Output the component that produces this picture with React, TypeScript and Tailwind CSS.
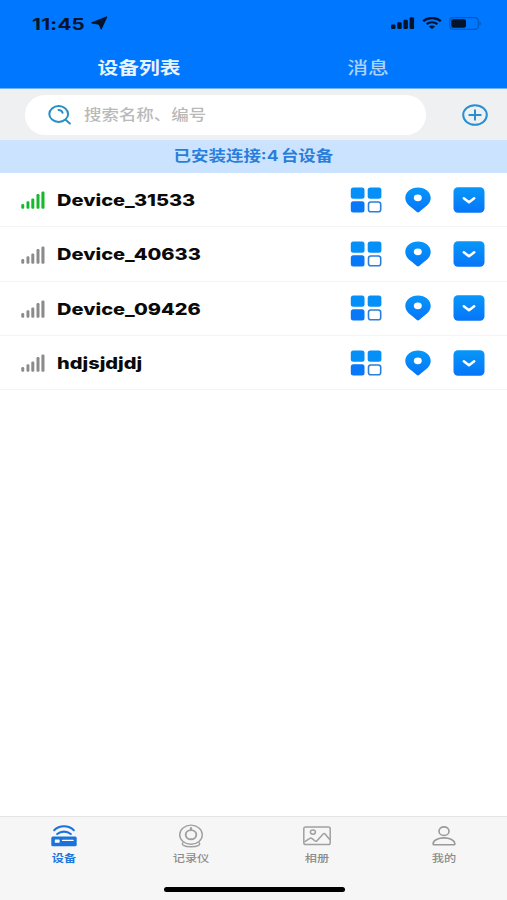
import React from 'react';
import { clsx } from 'clsx';

interface Device {
  name: string;
  online: boolean;
}

interface TabItemProps {
  icon: React.ElementType;
  label: string;
  isActive?: boolean;
}

const devices: Device[] = [
  { name: 'Device_31533', online: true },
  { name: 'Device_40633', online: false },
  { name: 'Device_09426', online: false },
  { name: 'hdjsjdjdj', online: false },
];

const StatusBar: React.FC = () => (
  <div className="flex h-[46px] items-center justify-between pr-[25px] pl-[32px]">
    <div className="flex items-center">
      <span className="w-[59px] origin-left scale-x-[1.25] pt-[2px] text-[16.5px] leading-none font-bold tracking-[0.2px] text-[#03142b]">
        11:45
      </span>
      <svg width="17" height="14" viewBox="0 0 17 14" fill="#03142b" stroke="#03142b" strokeWidth="1.3" strokeLinejoin="round">
        <path d="M15.600 1 10.200 12.800 8.300 8.200 1 6.900z" />
      </svg>
    </div>
    <div className="flex items-center gap-[7px]">
      <svg width="24" height="12" viewBox="0 0 24 12" fill="#03142b">
        <rect x="0" y="7.500" width="4.500" height="4.500" rx="1.200" />
        <rect x="6.200" y="5.300" width="4.500" height="6.700" rx="1.200" />
        <rect x="12.400" y="2.800" width="4.500" height="9.200" rx="1.200" />
        <rect x="18.600" y="0.200" width="4.500" height="11.800" rx="1.200" />
      </svg>
      <svg width="20" height="12" viewBox="0 0 20 12" fill="none" stroke="#03142b">
        <path d="M1.200 4.200c5-4.200 12.600-4.200 17.600 0" strokeWidth="2.400" />
        <path d="M4.500 7.200c3.200-2.500 7.800-2.500 11 0" strokeWidth="2.300" />
        <path d="M10 12 6.900 9.500c1.800-1.400 4.400-1.400 6.200 0z" fill="#03142b" stroke="none" />
      </svg>
      <svg width="33" height="13" viewBox="0 0 33 13">
        <rect x="0.700" y="0.700" width="28.600" height="11.600" rx="3.500" fill="none" stroke="#0259bd" strokeWidth="1.200" />
        <rect x="2.300" y="2.300" width="14.700" height="8.400" rx="2" fill="#03142b" />
        <path d="M30.500 4.300c1.900.8 1.900 3.600 0 4.400z" fill="#0259bd" />
      </svg>
    </div>
  </div>
);

const SignalIcon: React.FC<{ online: boolean }> = ({ online }) => (
  <svg width="24" height="18" viewBox="0 0 24 18" fill={online ? '#14b92c' : '#8b8b8b'} className="mt-px">
    <rect x="0.300" y="13" width="2.900" height="4.700" rx="1.200" />
    <rect x="5.500" y="10.200" width="2.900" height="7.500" rx="1.200" />
    <rect x="10.300" y="7.500" width="3" height="10.200" rx="1.200" />
    <rect x="15.500" y="3" width="3" height="14.700" rx="1.200" />
    <rect x="20.400" y="0.500" width="3.100" height="17.200" rx="1.200" />
  </svg>
);

const GridIcon: React.FC = () => (
  <svg width="32" height="26" viewBox="0 0 32 26">
    <rect x="0.800" y="0.500" width="13.700" height="11.300" rx="2.500" fill="#058ff8" />
    <rect x="17.700" y="0.500" width="13.700" height="11.300" rx="2.500" fill="#058ff8" />
    <rect x="0.800" y="14.200" width="13.700" height="11.300" rx="2.500" fill="#0678f8" />
    <rect x="18.500" y="15" width="12.200" height="9.800" rx="2.300" fill="#fff" stroke="#2c7fd9" strokeWidth="1.600" />
  </svg>
);

const PinIcon: React.FC = () => (
  <svg width="26" height="26" viewBox="0 0 26 26">
    <path
      d="M13 .5C5.900.5.300 5 .300 10.800c0 4.300 2.700 7.200 6.200 9.700l5.400 4.600c.7.600 1.500.6 2.200 0l5.400-4.600c3.500-2.500 6.200-5.400 6.200-9.700C25.700 5 20.100.5 13 .5z"
      fill="url(#blueFade)"
    />
    <ellipse cx="12.800" cy="10.800" rx="4" ry="3.400" fill="#fff" />
  </svg>
);

const ExpandIcon: React.FC = () => (
  <svg width="32" height="26" viewBox="0 0 32 26">
    <rect x="0.500" y="0.300" width="31" height="25.400" rx="4.500" fill="url(#blueFade)" />
    <path d="m10.800 11.300 5.200 3.900 5.200-3.900" fill="none" stroke="#fff" strokeWidth="2.600" strokeLinecap="round" strokeLinejoin="round" />
  </svg>
);

const DeviceRow: React.FC<{ device: Device }> = ({ device }) => (
  <li className="flex h-[54.350px] items-center border-b border-[#f3f4f5] pr-[22px] pl-[21px]">
    <SignalIcon online={device.online} />
    <span className="ml-[11.500px] origin-left scale-x-[1.23] pt-px text-[16.300px] leading-none font-extrabold text-[#0a0a0a]">
      {device.name}
    </span>
    <div className="ml-auto flex items-center">
      <GridIcon />
      <div className="mr-[22px] ml-[23px]">
        <PinIcon />
      </div>
      <ExpandIcon />
    </div>
  </li>
);

const RouterIcon: React.FC = () => (
  <svg width="26" height="22" viewBox="0 0 26 22" fill="none">
    <path d="M3.200 5.200C8.500 0 17.500 0 22.800 5.200M6.200 9c3.900-3.200 9.700-3.200 13.600 0" stroke="#1b72dc" strokeWidth="2.100" strokeLinecap="round" />
    <rect x="0.300" y="11.400" width="25.400" height="9.900" rx="1.500" fill="#1b72dc" />
    <rect x="3.800" y="14.400" width="4.800" height="3.400" rx="0.600" fill="#fff" />
    <path d="M11.500 15.400h10.600" stroke="#fff" strokeWidth="1.300" strokeLinecap="round" />
  </svg>
);

const RecorderIcon: React.FC = () => (
  <svg width="26" height="24" viewBox="0 0 26 24" fill="none" stroke="#a0a0a0" strokeWidth="1.400">
    <ellipse cx="13" cy="10.700" rx="11.300" ry="9.600" />
    <ellipse cx="13" cy="10.700" rx="5.300" ry="4.600" strokeWidth="1.900" />
    <path d="M13 4.200v1.600" strokeWidth="2.200" strokeLinecap="round" />
    <path d="M5.400 18.400c-3 2 .5 4.300 7.600 4.300s10.600-2.300 7.600-4.300" />
  </svg>
);

const AlbumIcon: React.FC = () => (
  <svg width="28" height="20" viewBox="0 0 28 20" fill="none" stroke="#a0a0a0" strokeWidth="1.500" strokeLinejoin="round">
    <rect x="0.800" y="0.900" width="26.400" height="17.700" rx="1.800" />
    <ellipse cx="9.900" cy="6.100" rx="2.500" ry="2.100" />
    <path d="m1.500 15.800 5.300-3.500q1-.7 2 .1l3.300 2.600q.9.700 1.700-.1l6.600-7.100q.8-.8 1.500 0l5 6" />
  </svg>
);

const ProfileIcon: React.FC = () => (
  <svg width="24" height="20" viewBox="0 0 24 20" fill="none" stroke="#999" strokeWidth="1.600">
    <ellipse cx="12" cy="5.200" rx="5" ry="4.300" />
    <path d="M2.200 18.800c-.8 0-1.200-.5-1.100-1.200.4-3.400 5.100-5.700 10.900-5.700s10.500 2.300 10.900 5.700c.1.700-.3 1.200-1.100 1.200z" />
  </svg>
);

const TabItem: React.FC<TabItemProps> = ({ icon: Icon, label, isActive }) => (
  <button className="flex flex-1 flex-col items-center pt-[7px]">
    <span className="flex h-6 items-center">
      <Icon />
    </span>
    <span
      className={clsx(
        'mt-[3px] scale-x-[1.220] text-[10px] leading-[14px]',
        isActive ? 'font-bold text-[#2176dc]' : 'font-medium text-[#8c8c8c]'
      )}
    >
      {label}
    </span>
  </button>
);

export default function App() {
  return (
    <div className="flex h-[900px] w-[507px] flex-col overflow-hidden bg-white font-[Inter,'Noto_Sans_CJK_SC',sans-serif]">
      {/* Shared gradient for the row action icons */}
      <svg width="0" height="0" className="absolute">
        <defs>
          <linearGradient id="blueFade" x1="0" y1="0" x2="0" y2="1">
            <stop offset="0" stopColor="#0797f9" />
            <stop offset="1" stopColor="#0675f8" />
          </linearGradient>
        </defs>
      </svg>

      <header className="h-[89px] shrink-0 border-b border-[#70b2f5] bg-[#0077ff]">
        <StatusBar />
        <div className="flex h-[42px] items-center pt-[2px] text-[17px] leading-none">
          <div className="flex w-[278px] justify-center">
            <span className="scale-x-[1.220] font-bold text-[#eaf4ff]">设备列表</span>
          </div>
          <div className="flex w-[179px] justify-center">
            <span className="scale-x-[1.220] font-medium text-[#acd2fc]">消息</span>
          </div>
        </div>
      </header>

      <div className="flex h-[51px] shrink-0 items-center justify-between bg-[#eff0f1] pr-[19px] pl-[25px]">
        <div className="flex h-10 w-[401px] items-center rounded-full bg-white pl-[23px]">
          <svg width="24" height="20" viewBox="0 0 24 20" fill="none" stroke="#278fc8" strokeWidth="2" strokeLinecap="round">
            <ellipse cx="10.700" cy="9" rx="9.400" ry="7.900" />
            <path d="m17.500 14.800 4.400 3.700M10.500 4.900c2 .1 3.600 1.300 4.100 2.900" />
          </svg>
          <span className="ml-[12px] origin-left scale-x-[1.220] pt-px text-[14.300px] leading-none font-medium text-[#b9b9b9]">
            搜索名称、编号
          </span>
        </div>
        <svg width="26" height="22" viewBox="0 0 26 22" fill="none" stroke="#278fd2" strokeWidth="2">
          <ellipse cx="13" cy="11" rx="11.800" ry="9.800" />
          <path d="M7.300 11h11.400M13 6.200v9.600" strokeLinecap="round" />
        </svg>
      </div>

      <div className="flex h-[33px] shrink-0 items-center justify-center bg-[#cce3ff]">
        <span className="scale-x-[1.220] text-[14.300px] leading-none font-bold text-[#2a7edb]">
          已安装连接:4<span className="ml-[2px]">台设备</span>
        </span>
      </div>

      <ul className="flex-1">
        {devices.map((device) => (
          <DeviceRow key={device.name} device={device} />
        ))}
      </ul>

      <footer className="flex h-[84px] shrink-0 flex-col items-center border-t border-[#e5e5e5] bg-[#f6f6f6]">
        <nav className="flex w-full pl-px">
          <TabItem icon={RouterIcon} label="设备" isActive />
          <TabItem icon={RecorderIcon} label="记录仪" />
          <TabItem icon={AlbumIcon} label="相册" />
          <TabItem icon={ProfileIcon} label="我的" />
        </nav>
        <div className="mt-auto mb-[8px] ml-px h-[5px] w-[181px] rounded-full bg-black" />
      </footer>
    </div>
  );
}
